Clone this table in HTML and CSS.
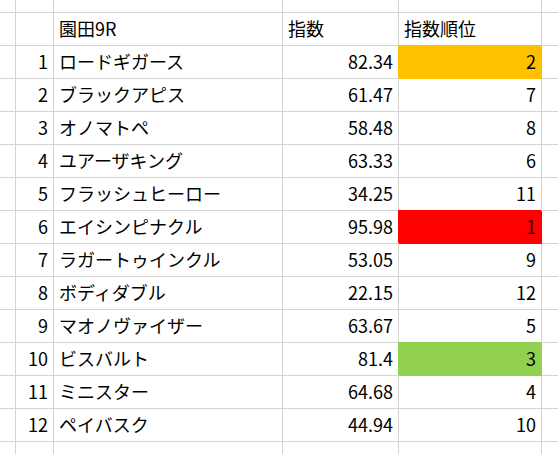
FILE: index.html
```html
<!DOCTYPE html>
<html lang="ja">
<head>
<meta charset="utf-8">
<link rel="stylesheet" href="styles.css">
</head>
<body>
<div class="sheet">
  <div class="c top"></div><div class="c top"></div><div class="c top"></div><div class="c top"></div><div class="c top"></div><div class="c top last"></div>

  <div class="c"></div><div class="c num"></div><div class="c txt">園田9R</div><div class="c txt">指数</div><div class="c txt">指数順位</div><div class="c last"></div>

  <div class="c"></div><div class="c num">1</div><div class="c txt">ロードギガース</div><div class="c num">82.34</div><div class="c num fill-orange">2</div><div class="c last"></div>
  <div class="c"></div><div class="c num">2</div><div class="c txt">ブラックアピス</div><div class="c num">61.47</div><div class="c num">7</div><div class="c last"></div>
  <div class="c"></div><div class="c num">3</div><div class="c txt">オノマトペ</div><div class="c num">58.48</div><div class="c num">8</div><div class="c last"></div>
  <div class="c"></div><div class="c num">4</div><div class="c txt">ユアーザキング</div><div class="c num">63.33</div><div class="c num">6</div><div class="c last"></div>
  <div class="c"></div><div class="c num">5</div><div class="c txt">フラッシュヒーロー</div><div class="c num">34.25</div><div class="c num">11</div><div class="c last"></div>
  <div class="c"></div><div class="c num">6</div><div class="c txt">エイシンピナクル</div><div class="c num">95.98</div><div class="c num fill-red">1</div><div class="c last"></div>
  <div class="c"></div><div class="c num">7</div><div class="c txt">ラガートゥインクル</div><div class="c num">53.05</div><div class="c num">9</div><div class="c last"></div>
  <div class="c"></div><div class="c num">8</div><div class="c txt">ボディダブル</div><div class="c num">22.15</div><div class="c num">12</div><div class="c last"></div>
  <div class="c"></div><div class="c num">9</div><div class="c txt">マオノヴァイザー</div><div class="c num">63.67</div><div class="c num">5</div><div class="c last"></div>
  <div class="c"></div><div class="c num">10</div><div class="c txt">ビスバルト</div><div class="c num">81.4</div><div class="c num fill-green">3</div><div class="c last"></div>
  <div class="c"></div><div class="c num">11</div><div class="c txt">ミニスター</div><div class="c num">64.68</div><div class="c num">4</div><div class="c last"></div>
  <div class="c"></div><div class="c num">12</div><div class="c txt">ペイバスク</div><div class="c num">44.94</div><div class="c num">10</div><div class="c last"></div>

  <div class="c"></div><div class="c"></div><div class="c"></div><div class="c"></div><div class="c"></div><div class="c last"></div>
</div>
</body>
</html>
```

FILE: styles.css
```css
html, body {
  margin: 0;
  padding: 0;
  background: #ffffff;
}

body {
  width: 558px;
  height: 454px;
  overflow: hidden;
  font-family: "Noto Sans CJK JP", "Noto Sans", sans-serif;
  font-size: 18px;
  color: #000000;
}

.sheet {
  display: grid;
  grid-template-columns: 16px 38px 229px 116px 143px 20px;
  grid-template-rows: 13px repeat(14, 33px);
}

.c {
  border-right: 1px solid #d4d4d4;
  border-bottom: 1px solid #d4d4d4;
  display: flex;
  align-items: center;
  white-space: nowrap;
  line-height: 1;
  padding-bottom: 2px;
  overflow: hidden;
}

.c.top {
  padding-bottom: 0;
}

.c.last {
  border-right: none;
}

.num {
  justify-content: flex-end;
  padding-right: 5px;
}

.txt {
  justify-content: flex-start;
  padding-left: 5px;
}

.fill-orange {
  background: #ffc000;
  box-shadow: -1px -1px 0 0 #ffc000;
  border-color: #ffc000;
}

.fill-red {
  background: #ff0000;
  box-shadow: -1px -1px 0 0 #ff0000;
  border-color: #ff0000;
}

.fill-green {
  background: #92d050;
  box-shadow: -1px -1px 0 0 #92d050;
  border-color: #92d050;
}
```
